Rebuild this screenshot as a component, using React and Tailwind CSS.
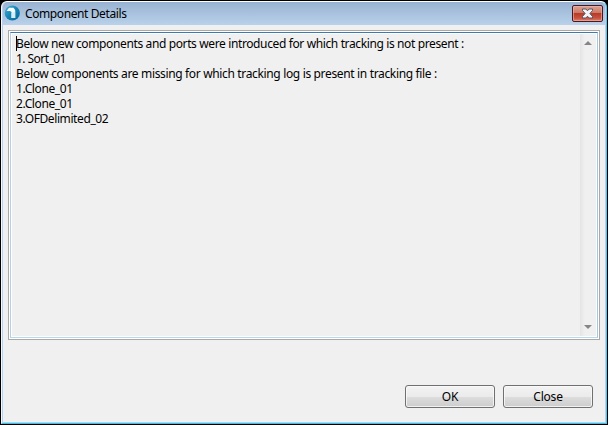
const lines = [
  { text: "Below new components and ports were introduced for which tracking is not present :", cls: "tracking-[-0.375px]" },
  { text: "1. Sort_01", cls: "tracking-[-0.55px]" },
  { text: "Below components are missing for which tracking log is present in tracking file :", cls: "tracking-[-0.345px]" },
  { text: "1.Clone_01", cls: "tracking-[-0.4px]" },
  { text: "2.Clone_01", cls: "tracking-[-0.4px]" },
  { text: "3.OFDelimited_02", cls: "tracking-[-0.4px]" },
];

function AppIcon() {
  return (
    <svg width="16" height="16" viewBox="0 0 16 16" className="shrink-0">
      <defs>
        <linearGradient id="orb" x1="0" y1="0" x2="1" y2="1">
          <stop offset="0" stopColor="#49b5cf" />
          <stop offset="0.5" stopColor="#1685b4" />
          <stop offset="1" stopColor="#086798" />
        </linearGradient>
      </defs>
      <circle cx="8.3" cy="8" r="7.6" fill="url(#orb)" />
      <path d="M2.5 6L5 2.7H9.5L11.2 5V13H7.5V7L6 6Z" fill="#f4fbfd" />
      <path d="M7.5 8L11.2 6.5V13H7.5Z" fill="#d7eef6" />
    </svg>
  );
}

function CloseGlyph() {
  return (
    <svg width="13" height="11" viewBox="0 0 13 11">
      <path
        d="M1.5 1H4.9L6.5 2.8L8.1 1H11.5V2.5L8.9 5.5L11.5 8.5V10H8.1L6.5 8.2L4.9 10H1.5V8.5L4.1 5.5L1.5 2.5Z"
        fill="#f4f4f6"
        stroke="#535666"
        strokeWidth="1"
      />
    </svg>
  );
}

function Button({ children }) {
  return (
    <button className="h-[23px] w-[90px] rounded-[3px] border border-[#707070] bg-[linear-gradient(#f3f3f3_0%,#ebebeb_50%,#dddddd_51%,#cdcdcd_100%)] p-0 text-center leading-[21px] tracking-[-0.2px] shadow-[inset_0_0_0_1px_#fafafacc]">
      {children}
    </button>
  );
}

export default function App() {
  return (
    <div className="h-[425px] w-[609px] border-r border-white bg-black pr-px pb-px pl-px pt-px font-['Noto_Sans',sans-serif] text-[12px] text-black">
      <div className="flex h-[423px] flex-col rounded-t-[6px] border-t border-r border-b border-l border-t-white border-r-[#3fcbf3] border-b-[#32c4e8] border-l-[#f4faff] bg-[#b9d1ea] px-px pb-px">
        <header className="flex h-[23px] shrink-0 items-start rounded-t-[5px] bg-[linear-gradient(#98b3d2,#b9d1ea)] pl-px pt-[3px]">
          <AppIcon />
          <h1 className="ml-[5px] flex-1 whitespace-nowrap leading-[18px] tracking-[-0.4px]">Component Details</h1>
          <button className="mr-[2px] flex h-[17px] w-[31px] items-center justify-center rounded-[2px] border border-[#4b1822] bg-[linear-gradient(#dea392_0%,#cc7867_45%,#b83c28_50%,#c8513d_80%,#d98271_100%)] p-0 shadow-[inset_0_0_0_1px_#e9b9ad99]">
            <CloseGlyph />
          </button>
        </header>
        <main className="flex flex-1 flex-col bg-[#f0f0f0] px-[5px] pt-[5px]">
          <div className="h-[310px] border border-[#a9a9a9] bg-white p-px">
            <div className="flex h-full border border-t-[#3d7bad] border-r-[#a4c9e3] border-b-[#b7d9ed] border-l-[#b5cfe7] p-px">
              <div className="flex-1 bg-[#f0f0f0] pl-1 pt-[2px]">
                <div className="relative">
                  {lines.map((line, i) => (
                    <p key={i} className={`h-[15px] whitespace-nowrap leading-[15px] ${line.cls}`}>{line.text}</p>
                  ))}
                  <span className="absolute left-0 top-0 h-[15px] w-px bg-black" />
                </div>
              </div>
              <div className="flex w-[16px] flex-col items-center justify-between bg-[linear-gradient(90deg,#e4e4e4,#f0f0f0_30%,#f0f0f0)] py-[7px]">
                <svg width="8" height="4" viewBox="0 0 8 4"><path d="M4 0L8 4H0Z" fill="#858585" /></svg>
                <svg width="8" height="4" viewBox="0 0 8 4"><path d="M0 0H8L4 4Z" fill="#858585" /></svg>
              </div>
            </div>
          </div>
          <div className="mt-[45px] flex justify-end gap-2 pr-[7px]">
            <Button>OK</Button>
            <Button>Close</Button>
          </div>
        </main>
      </div>
    </div>
  );
}
